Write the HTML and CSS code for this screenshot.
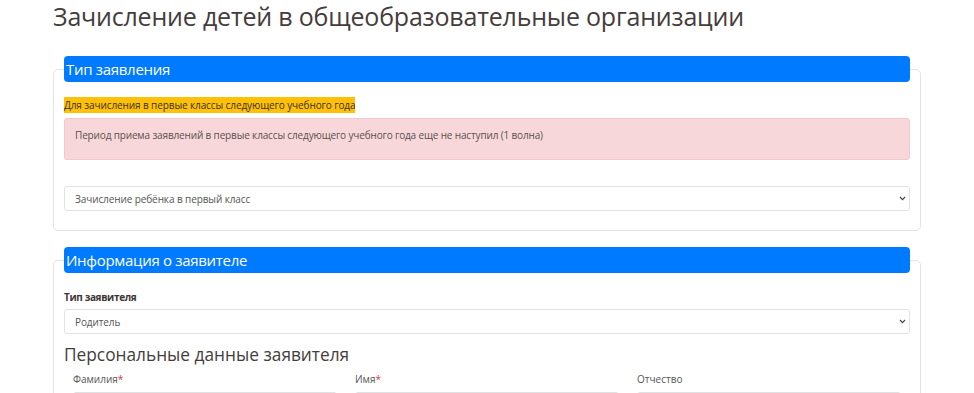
FILE: index.html
```html
<!DOCTYPE html>
<html lang="ru">
<head>
<meta charset="utf-8">
<title>Зачисление детей в общеобразовательные организации</title>
<link rel="stylesheet" href="styles.css">
</head>
<body>
<main class="page">
  <h1 class="page-title">Зачисление детей в общеобразовательные организации</h1>

  <fieldset class="group">
    <legend class="group-legend">Тип заявления</legend>
    <div class="notice"><span class="notice-mark">Для зачисления в первые классы следующего учебного года</span></div>
    <div class="alert">Период приема заявлений в первые классы следующего учебного года еще не наступил (1 волна)</div>
    <div class="select select-gap">
      <span class="select-text">Зачисление ребёнка в первый класс</span>
      <svg class="chev" width="7" height="5" viewBox="0 0 7 5"><path d="M1 1 L3.5 3.6 L6 1" fill="none" stroke="#444" stroke-width="1.2"/></svg>
    </div>
  </fieldset>

  <fieldset class="group">
    <legend class="group-legend">Информация о заявителе</legend>
    <div class="field-label">Тип заявителя</div>
    <div class="select">
      <span class="select-text">Родитель</span>
      <svg class="chev" width="7" height="5" viewBox="0 0 7 5"><path d="M1 1 L3.5 3.6 L6 1" fill="none" stroke="#444" stroke-width="1.2"/></svg>
    </div>
    <h2 class="section-title">Персональные данные заявителя</h2>
    <div class="row">
      <div class="col">
        <div class="input-label">Фамилия<span class="req">*</span></div>
        <div class="input"></div>
      </div>
      <div class="col">
        <div class="input-label">Имя<span class="req">*</span></div>
        <div class="input"></div>
      </div>
      <div class="col">
        <div class="input-label">Отчество</div>
        <div class="input"></div>
      </div>
    </div>
  </fieldset>
</main>
</body>
</html>
```

FILE: styles.css
```css
* { box-sizing: border-box; }
html, body { margin: 0; padding: 0; background: #fff; }
body {
  font-family: "Open Sans", "Noto Sans", sans-serif;
  color: #4a4444;
  overflow: hidden;
}
.page {
  width: 868px;
  margin-left: 53px;
}
.page-title {
  margin: 0;
  font-size: 25px;
  line-height: 33px;
  font-weight: 400;
  color: #463c3c;
  letter-spacing: -0.2px;
}
.group {
  margin: 23px 0 16px;
  padding: 0 10px 19px;
  border: 1px solid #e3e3e3;
  border-radius: 5px;
  min-width: 0;
}
.group + .group { margin-top: 0; }
.group-legend {
  width: 100%;
  height: 26px;
  padding: 0 2px;
  background: #007bff;
  color: #fff;
  border-radius: 4px;
  font-size: 15px;
  line-height: 26px;
  letter-spacing: -0.3px;
}
.notice {
  margin-top: 15px;
  font-size: 10px;
  line-height: 16px;
  letter-spacing: -0.1px;
}
.notice-mark {
  background: #ffc107;
  color: #3a3030;
  padding: 1px 0;
}
.alert {
  margin-top: 5px;
  background: #f8d7da;
  border: 1px solid #f5c6cb;
  border-radius: 3px;
  padding: 8px 10px 16px;
  font-size: 10px;
  line-height: 16px;
  letter-spacing: -0.15px;
  color: #5a5050;
}
.select {
  height: 25px;
  border: 1px solid #e2e2e2;
  border-radius: 3px;
  display: flex;
  align-items: center;
  justify-content: space-between;
  padding: 0 3px 0 10px;
  font-size: 10px;
  letter-spacing: -0.1px;
  color: #555;
}
.select-gap { margin-top: 26px; }
.chev { display: block; }
.field-label {
  margin-top: 16px;
  font-size: 10px;
  line-height: 16px;
  font-weight: 700;
  letter-spacing: -0.35px;
  color: #3d3535;
  margin-bottom: 4px;
}
.section-title {
  margin: 9px 0 4px;
  font-size: 17.3px;
  line-height: 24px;
  font-weight: 400;
  letter-spacing: 0;
  color: #463c3c;
}
.row {
  display: flex;
}
.col {
  flex: 1;
  padding: 0 9px;
}
.input-label {
  font-size: 10px;
  line-height: 16px;
  color: #555;
  margin-bottom: 5px;
}
.req { color: #dc3545; }
.input {
  height: 25px;
  background: #eceeef;
  border: 1px solid #dfe1e3;
  border-radius: 3px;
}
```
